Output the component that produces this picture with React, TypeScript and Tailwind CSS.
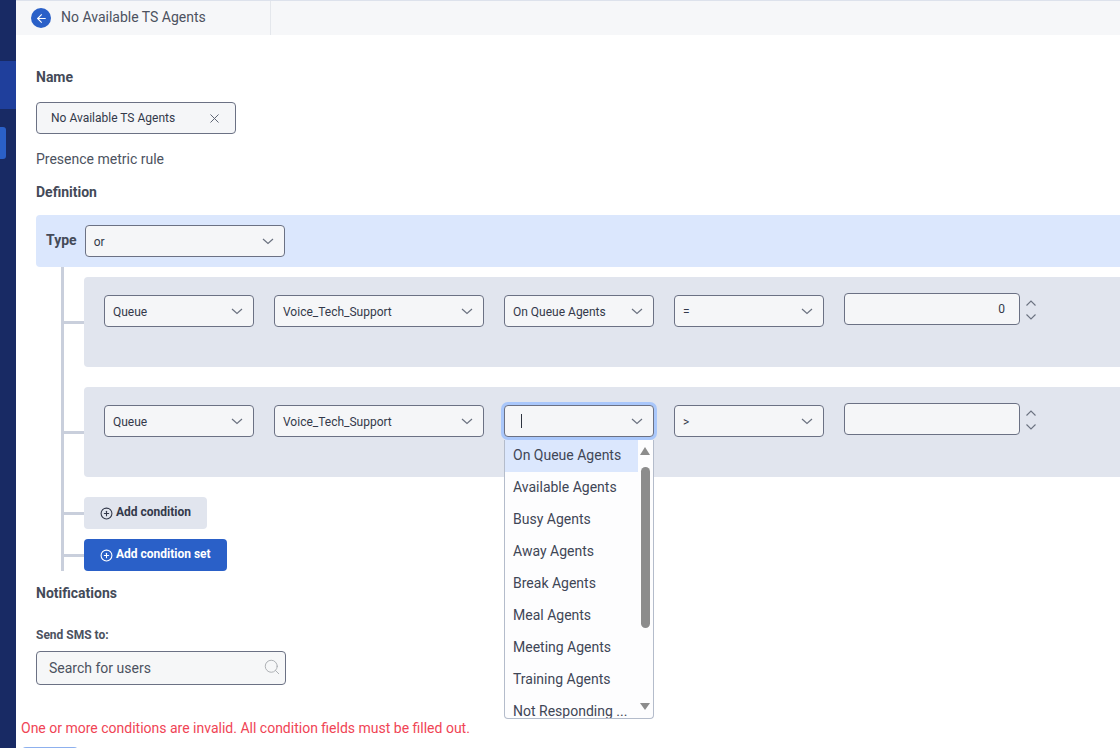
import React from "react";
import { ArrowLeft, CirclePlus, Search, X } from "lucide-react";

const agentOptions = [
  "On Queue Agents",
  "Available Agents",
  "Busy Agents",
  "Away Agents",
  "Break Agents",
  "Meal Agents",
  "Meeting Agents",
  "Training Agents",
  "Not Responding ...",
];

const Chevron = () => (
  <svg width="12" height="7" viewBox="0 0 12 7" fill="none">
    <path d="M1 1L6 5.5L11 1" stroke="#6b7280" strokeWidth="1.2" />
  </svg>
);

const StepChevron = ({ up = false }: { up?: boolean }) => (
  <svg width="10" height="6" viewBox="0 0 10 6" fill="none">
    <path d={up ? "M0.5 5.5L5 1L9.5 5.5" : "M0.5 0.5L5 5L9.5 0.5"} stroke="#6b7280" strokeWidth="1.1" />
  </svg>
);

const Select = ({ value, width, focused = false }: { value?: string; width: string; focused?: boolean }) => (
  <div
    className={`${width} h-8 shrink-0 flex items-center justify-between pl-2 pr-[10px] bg-[#f5f6f8] border border-[#6b7184] rounded-[4px] text-xs text-[#33394a] ${
      focused ? "ring-[3px] ring-[#a9c7fb]" : ""
    }`}
  >
    {focused ? <span className="ml-2 w-px h-[14px] bg-[#2e3440]" /> : <span className="mt-0.5">{value}</span>}
    <Chevron />
  </div>
);

const NumberField = ({ value }: { value?: string }) => (
  <div className="flex shrink-0 -mt-0.5">
    <div className="w-[176px] h-8 flex items-center justify-end pr-[14px] bg-[#f5f6f8] border border-[#6b7184] rounded-[4px] text-xs text-[#33394a]">
      {value}
    </div>
    <div className="ml-[6px] mt-[7px] flex flex-col gap-[8px]">
      <StepChevron up />
      <StepChevron />
    </div>
  </div>
);

const ConditionRow = ({
  metric,
  operator,
  value,
  open = false,
}: {
  metric?: string;
  operator: string;
  value?: string;
  open?: boolean;
}) => (
  <div className="flex items-center">
    <div className="w-5 h-[3px] bg-[#c9cfdc]" />
    <div className="relative flex-1 h-[90px] bg-[#e1e5ee] rounded-l-[4px] pl-5 pt-[18px] flex items-start gap-5">
      <Select value="Queue" width="w-[150px]" />
      <Select value="Voice_Tech_Support" width="w-[210px]" />
      <Select value={metric} width="w-[150px]" focused={open} />
      <Select value={operator} width="w-[150px]" />
      <NumberField value={value} />
      {open && <AgentMenu />}
    </div>
  </div>
);

const AgentMenu = () => (
  <div className="absolute z-10 left-[420px] top-[53px] w-[150px] h-[279px] bg-[#fdfdfe] border border-t-0 border-[#b4bccb] rounded-b-[4px] overflow-hidden">
    <ul className="w-[133px]">
      {agentOptions.map((option, i) => (
        <li
          key={option}
          className={`h-8 pl-2 pb-0.5 flex items-center text-sm text-[#3f4656] whitespace-nowrap ${
            i === 0 ? "bg-[#dbe7fd]" : ""
          }`}
        >
          {option}
        </li>
      ))}
    </ul>
    {/* scrollbar */}
    <div className="absolute top-0 bottom-0 right-[3px] w-[10px]">
      <div className="absolute top-[7px] left-0 w-0 h-0 border-x-[5px] border-x-transparent border-b-[8px] border-b-[#8c8c8c]" />
      <div className="absolute top-[27px] left-[1px] w-[9px] h-[161px] rounded-full bg-[#8c8c8c]" />
      <div className="absolute bottom-[8px] left-0 w-0 h-0 border-x-[5px] border-x-transparent border-t-[7px] border-t-[#8c8c8c]" />
    </div>
  </div>
);

const ActionRow = ({ label, className }: { label: string; className: string }) => (
  <div className="flex items-center">
    <div className="w-5 h-[3px] bg-[#c9cfdc]" />
    <button className={`h-8 pl-4 flex items-center gap-[3px] rounded-[4px] text-xs font-bold ${className}`}>
      <CirclePlus size={13} />
      <span className="-mt-0.5">{label}</span>
    </button>
  </div>
);

export default function App() {
  return (
    <div
      className="w-[1120px] h-[748px] overflow-hidden flex bg-white"
      style={{ fontFamily: "Roboto, sans-serif" }}
    >
      {/* Side nav */}
      <aside className="w-4 shrink-0 bg-[#182a64] pt-[61px]">
        <div className="h-[48px] bg-[#1f3f9c]" />
        <div className="mt-[18px] w-[6px] h-8 bg-[#2a60c8] rounded-r-[3px]" />
      </aside>

      <main className="flex-1 min-w-0">
        {/* Header */}
        <header className="h-[35px] bg-[#f6f7f9] border-t border-[#dde2ec] flex">
          <div className="w-[255px] border-r border-[#e4e7ec] pl-[15px] flex items-center gap-[10px]">
            <span className="w-5 h-5 rounded-full bg-[#2a60c8] flex items-center justify-center">
              <ArrowLeft size={13} color="#ffffff" strokeWidth={2} />
            </span>
            <span className="-mt-0.5 text-sm text-[#4c5260]">No Available TS Agents</span>
          </div>
        </header>

        <div className="pl-5 pt-[33px]">
          <h2 className="text-sm leading-[18px] font-bold text-[#444a58]">Name</h2>
          <div className="mt-4 w-[200px] h-8 flex items-center justify-between pl-[14px] pr-[13px] bg-[#f5f6f8] border border-[#6b7184] rounded-[4px] text-xs text-[#33394a]">
            <span>No Available TS Agents</span>
            <X size={15} color="#5f6675" strokeWidth={1.6} />
          </div>
          <p className="mt-4 text-sm leading-[18px] text-[#4c5260]">Presence metric rule</p>
          <h2 className="mt-[15px] text-sm leading-[18px] font-bold text-[#444a58]">Definition</h2>

          {/* Type bar */}
          <div className="mt-[14px] h-[52px] bg-[#dbe7fd] rounded-l-[4px] pl-[10px] flex items-center gap-2">
            <span className="-mt-0.5 text-sm font-bold text-[#444a58]">Type</span>
            <Select value="or" width="w-[200px]" />
          </div>

          {/* Conditions */}
          <div className="ml-[25px] border-l-[3px] border-[#c9cfdc] pt-[10px] flex flex-col gap-5">
            <ConditionRow metric="On Queue Agents" operator="=" value="0" />
            <ConditionRow operator=">" open />
            <div className="flex flex-col gap-[10px]">
              <ActionRow label="Add condition" className="w-[123px] bg-[#e1e5ee] text-[#33394a]" />
              <ActionRow label="Add condition set" className="w-[143px] bg-[#2a60c8] text-white" />
            </div>
          </div>

          <h2 className="mt-[13px] text-sm leading-[18px] font-bold text-[#444a58]">Notifications</h2>
          <label className="block mt-[25px] text-xs leading-[16px] font-bold text-[#4c5260]">Send SMS to:</label>
          <div className="mt-2 w-[250px] h-[34px] flex items-center justify-between pl-3 pr-1 bg-[#f6f7f8] border border-[#6b7184] rounded-[4px] text-sm text-[#4c5260]">
            <span>Search for users</span>
            <Search size={18} color="#a6a9ae" strokeWidth={1.2} className="-mt-0.5" />
          </div>
        </div>

        <p className="mt-[34px] ml-[5px] text-sm leading-[18px] text-[#f04455]">
          One or more conditions are invalid. All condition fields must be filled out.
        </p>
        <div className="mt-[10px] ml-[6px] w-[56px] h-8 bg-[#8db0ee] rounded-[4px]" />
      </main>
    </div>
  );
}
